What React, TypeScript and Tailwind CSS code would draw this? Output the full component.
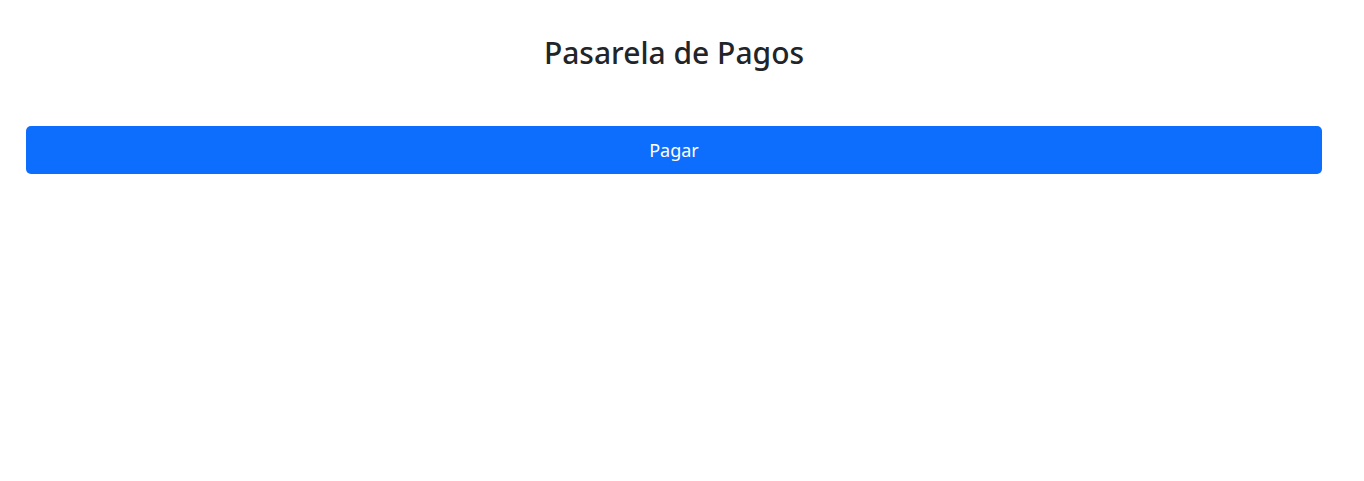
export default function App() {
  return (
    <div className="min-h-screen bg-white" style={{ fontFamily: '"Noto Sans", "Open Sans", sans-serif' }}>
      <div className="ml-[26px] w-[1296px] pt-[34px]">
        <h2 className="text-center text-[30px] leading-[38px] font-medium text-[#212529]">Pasarela de Pagos</h2>
        <button className="mt-[54px] flex h-[48px] w-full items-center justify-center rounded-[5px] bg-[#0d6efd] text-[18px] text-white">
          Pagar
        </button>
      </div>
    </div>
  );
}
